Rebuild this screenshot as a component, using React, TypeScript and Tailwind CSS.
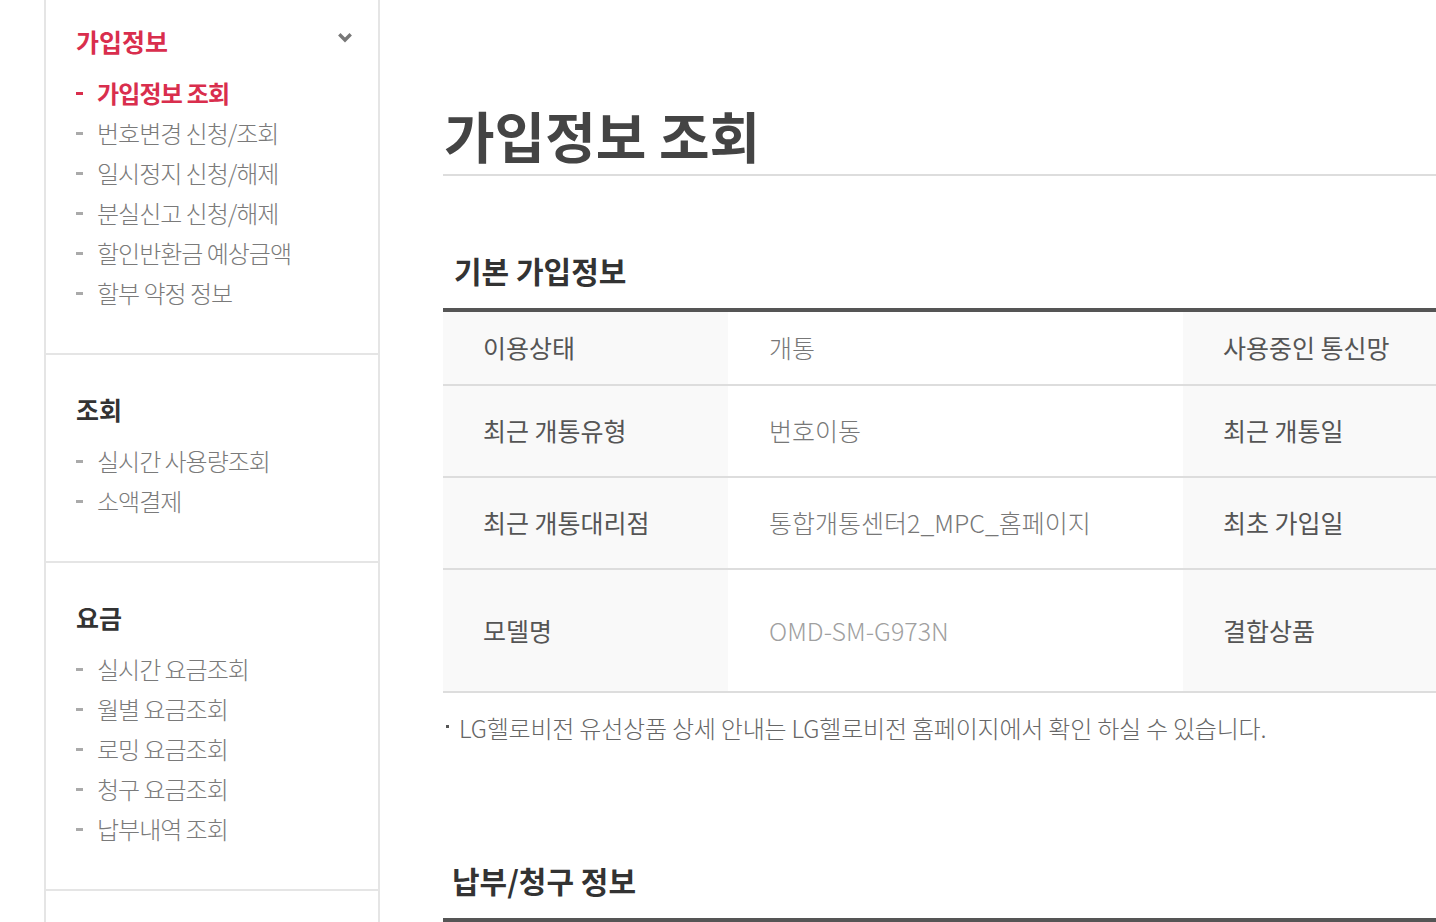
import React from "react";

const Dash = ({ active }: { active?: boolean }) => (
  <span className={`inline-block w-[7px] h-[3px] mr-[14px] shrink-0 ${active ? "bg-[#d92e4d]" : "bg-[#aaaaaa]"}`} />
);

const Item = ({ label, active }: { label: string; active?: boolean }) => (
  <li className="flex items-center h-[40px]">
    <Dash active={active} />
    <span
      className={
        active
          ? "text-[24px] font-bold tracking-[-0.8px] text-[#d92e4d]"
          : "text-[24px] font-light tracking-[-1px] text-[#7a7a7a]"
      }
    >
      {label}
    </span>
  </li>
);

const Chevron = () => (
  <svg width="14" height="10" viewBox="0 0 14 10" className="-mt-[6px] mr-[2px]">
    <path d="M2.5 2.5 L7 7 L11.5 2.5" fill="none" stroke="#777777" strokeWidth="3.4" strokeLinecap="square" strokeLinejoin="miter" />
  </svg>
);

const Section = ({
  title,
  items,
  first,
  activeIndex,
}: {
  title: string;
  items: string[];
  first?: boolean;
  activeIndex?: number;
}) => (
  <div className={`border-b-2 border-[#e5e5e5] pl-[30px] pr-[24px] pb-[40px] ${first ? "pt-[26px]" : "pt-[39px]"}`}>
    <div className="flex items-center justify-between h-[30px]">
      <span className={`text-[25px] font-bold leading-[30px] ${first ? "text-[#d92e4d]" : "text-[#333333]"}`}>{title}</span>
      {first && <Chevron />}
    </div>
    <ul className="mt-[17px]">
      {items.map((it, i) => (
        <Item key={it} label={it} active={i === activeIndex} />
      ))}
    </ul>
  </div>
);

const LabelCell = ({ children }: { children: React.ReactNode }) => (
  <div className="bg-[#f9f9f9] flex items-center pl-[40px] text-[25px] text-[#555555]">{children}</div>
);
const ValueCell = ({ children, light }: { children?: React.ReactNode; light?: boolean }) => (
  <div className={`bg-white flex items-center pl-[41px] text-[25px] font-light ${light ? "text-[#a0a0a0]" : "text-[#777777]"}`}>
    {children}
  </div>
);

const rows: { h: string; a: string; b: string; c: string; light?: boolean }[] = [
  { h: "h-[74px]", a: "이용상태", b: "개통", c: "사용중인 통신망" },
  { h: "h-[92px]", a: "최근 개통유형", b: "번호이동", c: "최근 개통일" },
  { h: "h-[92px]", a: "최근 개통대리점", b: "통합개통센터2_MPC_홈페이지", c: "최초 가입일" },
  { h: "h-[123px]", a: "모델명", b: "OMD-SM-G973N", c: "결합상품", light: true },
];

export default function App() {
  return (
    <div className="flex h-[922px] w-full overflow-hidden bg-white font-['Noto_Sans_CJK_KR',sans-serif]">
      <aside className="ml-[44px] w-[336px] shrink-0 border-x-2 border-[#e5e5e5] h-full">
        <Section
          first
          title="가입정보"
          activeIndex={0}
          items={["가입정보 조회", "번호변경 신청/조회", "일시정지 신청/해제", "분실신고 신청/해제", "할인반환금 예상금액", "할부 약정 정보"]}
        />
        <Section title="조회" items={["실시간 사용량조회", "소액결제"]} />
        <Section title="요금" items={["실시간 요금조회", "월별 요금조회", "로밍 요금조회", "청구 요금조회", "납부내역 조회"]} />
      </aside>
      <main className="ml-[63px] flex-1 min-w-0 overflow-hidden">
        <div className="pt-[104px] pb-[10px] border-b-2 border-[#dddddd]">
          <h1 className="text-[55px] leading-[60px] font-bold text-[#444444] pl-[1px]">가입정보 조회</h1>
        </div>
        <h2 className="mt-[74px] pl-[11px] text-[30px] leading-[40px] font-bold text-[#333333]">기본 가입정보</h2>
        <div className="mt-[18px] w-[1480px] border-t-4 border-[#555555]">
          {rows.map((r) => (
            <div key={r.a} className={`grid grid-cols-[285px_455px_285px_455px] border-b-2 border-[#dddddd] ${r.h}`}>
              <LabelCell>{r.a}</LabelCell>
              <ValueCell light={r.light}>{r.b}</ValueCell>
              <LabelCell>{r.c}</LabelCell>
              <ValueCell />
            </div>
          ))}
        </div>
        <p className="mt-[20px] flex items-center text-[24px] tracking-[-0.2px] leading-[30px] font-light text-[#666666]">
          <span className="inline-block w-[3px] h-[3px] bg-[#555555] ml-[3px] mr-[10px] -mt-[4px]" />
          LG헬로비전 유선상품 상세 안내는 LG헬로비전 홈페이지에서 확인 하실 수 있습니다.
        </p>
        <h2 className="mt-[117px] pl-[9px] text-[30px] leading-[40px] font-bold text-[#333333]">납부/청구 정보</h2>
        <div className="mt-[18px] w-[1480px] border-t-4 border-[#555555]" />
      </main>
    </div>
  );
}
